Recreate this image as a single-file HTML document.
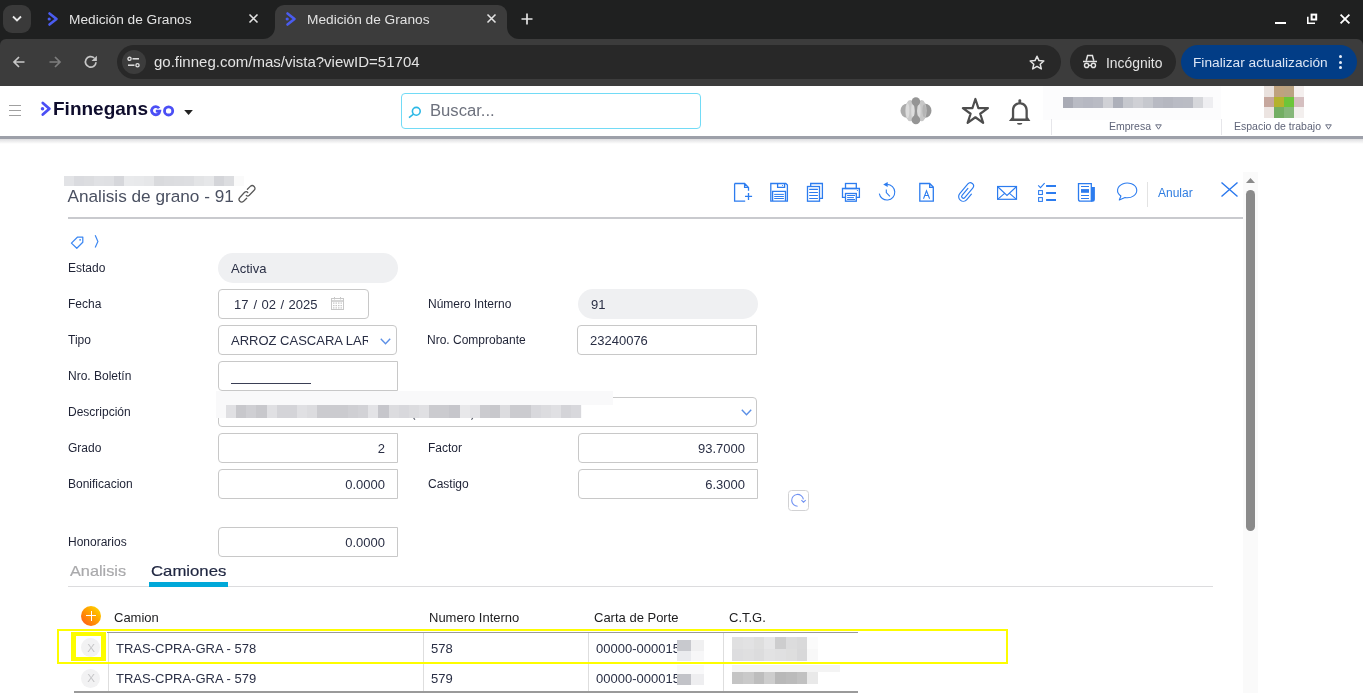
<!DOCTYPE html>
<html><head><meta charset="utf-8">
<style>
*{box-sizing:border-box;margin:0;padding:0}
html,body{width:1363px;height:693px;overflow:hidden;background:#fff;font-family:"Liberation Sans",sans-serif;position:relative}
.a{position:absolute}
svg{position:absolute;overflow:visible}
/* chrome */
#strip{left:0;top:0;width:1363px;height:50px;background:#1f2020}
#tabbtn{left:3px;top:5px;width:28px;height:28px;border-radius:9px;background:#3a3a3a}
.tabt{font-size:13.7px;color:#e3e3e3;top:12px;white-space:nowrap}
#acttab{left:275px;top:5px;width:232px;height:36px;background:#3c3c3c;border-radius:9px 9px 0 0}
#toolbar{left:0;top:39px;width:1363px;height:47px;background:#3c3c3c;border-radius:6px 6px 0 0}
#omni{left:117px;top:45px;width:944px;height:34px;border-radius:17px;background:#282828}
#url{left:154px;top:53px;font-size:15px;color:#e3e3e3;white-space:nowrap}
#incog{left:1070px;top:45px;width:106px;height:34px;border-radius:17px;background:#282828}
#fin{left:1181px;top:45px;width:176px;height:34px;border-radius:17px;background:#023d86}
/* app header */
#hdr{left:0;top:86px;width:1363px;height:50px;background:#fff}
#hdrline{left:0;top:136px;width:1363px;height:3px;background:#9da0a9}
#hdrshadow{left:0;top:139px;width:1363px;height:5px;background:linear-gradient(#dedee0,#fff)}
.lbl{font-size:12px;color:#1e2235;white-space:nowrap;left:68px}
.inp{border:1px solid #c8c8c8;border-radius:4px;background:#fff;height:30px}
.pill{background:#eff0f2;border-radius:15px;height:30px}
.val{font-size:13px;color:#2a2f45;white-space:nowrap}
</style></head><body>
<div id="root" style="position:absolute;left:0;top:0;width:1363px;height:693px;will-change:transform;overflow:hidden">
<!-- ===== browser chrome ===== -->
<div class="a" id="strip"></div>
<div class="a" id="tabbtn"></div>
<svg style="left:11px;top:14px" width="12" height="10" viewBox="0 0 12 10"><path d="M2 2.5 L6 6.5 L10 2.5" fill="none" stroke="#e8e8e8" stroke-width="1.8"/></svg>
<svg style="left:47px;top:12px" width="12" height="14" viewBox="0 0 12 14"><path d="M2.5 1.5 L9.5 7 L2.5 12.5" fill="none" stroke="#4a5cf0" stroke-width="2.6" stroke-linecap="round" stroke-linejoin="round"/><circle cx="2.2" cy="7" r="1.6" fill="#4a5cf0"/></svg>
<div class="a tabt" style="left:69px">Medición de Granos</div>
<svg style="left:249px;top:14px" width="9" height="9" viewBox="0 0 9 9"><path d="M0.5 0.5 L8.5 8.5 M8.5 0.5 L0.5 8.5" stroke="#e3e3e3" stroke-width="1.6"/></svg>
<div class="a" id="acttab"></div>
<div class="a" style="left:263px;top:27px;width:12px;height:12px;background:#3c3c3c"></div>
<div class="a" style="left:263px;top:27px;width:12px;height:12px;background:#1f2020;border-radius:0 0 12px 0"></div>
<div class="a" style="left:507px;top:27px;width:12px;height:12px;background:#3c3c3c"></div>
<div class="a" style="left:507px;top:27px;width:12px;height:12px;background:#1f2020;border-radius:0 0 0 12px"></div>
<svg style="left:285px;top:12px" width="12" height="14" viewBox="0 0 12 14"><path d="M2.5 1.5 L9.5 7 L2.5 12.5" fill="none" stroke="#4a5cf0" stroke-width="2.6" stroke-linecap="round" stroke-linejoin="round"/><circle cx="2.2" cy="7" r="1.6" fill="#4a5cf0"/></svg>
<div class="a tabt" style="left:307px">Medición de Granos</div>
<svg style="left:487px;top:14px" width="9" height="9" viewBox="0 0 9 9"><path d="M0.5 0.5 L8.5 8.5 M8.5 0.5 L0.5 8.5" stroke="#e3e3e3" stroke-width="1.6"/></svg>
<svg style="left:521px;top:13px" width="12" height="12" viewBox="0 0 12 12"><path d="M6 0.5 V11.5 M0.5 6 H11.5" stroke="#e3e3e3" stroke-width="1.7"/></svg>
<!-- window controls -->
<div class="a" style="left:1275px;top:21.5px;width:10.5px;height:2.6px;background:#fff"></div>
<svg style="left:0;top:0" width="1363" height="693" viewBox="0 0 1363 693"><path d="M1307.8 16.8 V23.2 H1315" fill="none" stroke="#fff" stroke-width="1.6"/><rect x="1311.6" y="14.6" width="4.6" height="4.9" fill="none" stroke="#fff" stroke-width="2"/></svg>
<svg style="left:1340px;top:14px" width="10" height="10" viewBox="0 0 10 10"><path d="M0.6 0.6 L9.4 9.4 M9.4 0.6 L0.6 9.4" stroke="#fff" stroke-width="1.8"/></svg>

<div class="a" id="toolbar"></div>
<svg style="left:13px;top:56px" width="12" height="12" viewBox="0 0 12 12"><path d="M11.5 6 H1.2 M6 1 L1 6 L6 11" fill="none" stroke="#c7c7c7" stroke-width="1.7"/></svg>
<svg style="left:49px;top:56px" width="12" height="12" viewBox="0 0 12 12"><path d="M0.5 6 H10.8 M6 1 L11 6 L6 11" fill="none" stroke="#7d7d7d" stroke-width="1.7"/></svg>
<svg style="left:0;top:0" width="1363" height="693" viewBox="0 0 1363 693"><path d="M96 62.2 A5.3 5.3 0 1 1 94.2 57.9" fill="none" stroke="#c7c7c7" stroke-width="1.7"/><path d="M91.5 61 L96.9 55.7 V61 Z" fill="#c7c7c7"/></svg>
<div class="a" id="omni"></div>
<div class="a" style="left:122px;top:50px;width:24px;height:24px;border-radius:12px;background:#3c3c3c"></div>
<svg style="left:127px;top:56px" width="14" height="12" viewBox="0 0 14 12"><circle cx="2.5" cy="2.8" r="1.6" fill="none" stroke="#e3e3e3" stroke-width="1.3"/><path d="M5.5 2.8 H12" stroke="#e3e3e3" stroke-width="1.5"/><circle cx="10.5" cy="9.2" r="1.6" fill="none" stroke="#e3e3e3" stroke-width="1.3"/><path d="M1 9.2 H7.5" stroke="#e3e3e3" stroke-width="1.5"/></svg>
<div class="a" id="url">go.finneg.com/mas/vista?viewID=51704</div>
<svg style="left:1029px;top:55px" width="16" height="15" viewBox="0 0 16 15"><path d="M8 1.2 L10 5.6 L14.8 6 L11.2 9.2 L12.3 13.9 L8 11.4 L3.7 13.9 L4.8 9.2 L1.2 6 L6 5.6 Z" fill="none" stroke="#e3e3e3" stroke-width="1.5" stroke-linejoin="round"/></svg>
<div class="a" id="incog"></div>
<svg style="left:0;top:0" width="1363" height="693" viewBox="0 0 1363 693"><path d="M1086.2 60.8 L1087.6 55.6 H1092.4 L1093.8 60.8" fill="none" stroke="#e3e3e3" stroke-width="1.5"/><path d="M1083 61.5 H1097" stroke="#e3e3e3" stroke-width="1.5"/><circle cx="1086.6" cy="65.4" r="2.1" fill="none" stroke="#e3e3e3" stroke-width="1.4"/><circle cx="1093.4" cy="65.4" r="2.1" fill="none" stroke="#e3e3e3" stroke-width="1.4"/><path d="M1088.7 65.4 H1091.3" stroke="#e3e3e3" stroke-width="1.2"/></svg>
<div class="a" style="left:1106px;top:55px;font-size:13.9px;color:#e3e3e3;white-space:nowrap">Incógnito</div>
<div class="a" id="fin"></div>
<div class="a" style="left:1193px;top:55px;font-size:13.7px;color:#dde6f5;white-space:nowrap">Finalizar actualización</div>
<div class="a" style="left:1339.4px;top:55px;width:3px;height:3px;border-radius:2px;background:#e8eef8"></div>
<div class="a" style="left:1339.4px;top:60.5px;width:3px;height:3px;border-radius:2px;background:#e8eef8"></div>
<div class="a" style="left:1339.4px;top:65.9px;width:3px;height:3px;border-radius:2px;background:#e8eef8"></div>

<!-- ===== app header ===== -->
<div class="a" id="hdr"></div>
<div class="a" id="hdrline"></div>
<div class="a" id="hdrshadow"></div>

<!-- hamburger -->
<div class="a" style="left:9px;top:104.5px;width:12px;height:1.5px;background:#a0a0a0"></div>
<div class="a" style="left:9px;top:109.5px;width:12px;height:1.5px;background:#a0a0a0"></div>
<div class="a" style="left:9px;top:114.5px;width:12px;height:1.5px;background:#a0a0a0"></div>
<!-- logo -->
<svg style="left:0;top:0" width="1363" height="693" viewBox="0 0 1363 693"><path d="M42.8 103 L49.4 108.7 L42.8 114.5" fill="none" stroke="#4b4ff5" stroke-width="2.8" stroke-linecap="round" stroke-linejoin="round"/><circle cx="42.5" cy="108.7" r="1.75" fill="#4b4ff5"/></svg>
<div class="a" style="left:53px;top:97.5px;font-size:19px;font-weight:bold;color:#0e0c2c;white-space:nowrap;letter-spacing:0px">Finnegans</div>
<svg style="left:0;top:0" width="1363" height="693" viewBox="0 0 1363 693"><circle cx="168.6" cy="110.9" r="4.1" fill="none" stroke="#4b4ff5" stroke-width="2.8"/><path d="M159.1 108.3 A4.1 4.1 0 1 0 159.8 111.1 H155.8" fill="none" stroke="#4b4ff5" stroke-width="2.8"/></svg>
<svg style="left:0;top:0" width="1363" height="693" viewBox="0 0 1363 693"><path d="M184.2 110.1 H192.9 L188.55 115 Z" fill="#222"/></svg>
<!-- search -->
<div class="a" style="left:401px;top:93px;width:300px;height:36px;border:1px solid #72dbf6;border-radius:4px"></div>
<svg style="left:408px;top:106px" width="14" height="12" viewBox="0 0 14 12"><circle cx="8.3" cy="5.3" r="3.9" fill="none" stroke="#2cb8e6" stroke-width="1.6"/><path d="M5.5 8.2 L1 11.6" stroke="#2cb8e6" stroke-width="1.6"/></svg>
<div class="a" style="left:430px;top:102px;font-size:16px;color:#6d717d;white-space:nowrap;transform:scaleX(1.04);transform-origin:0 0">Buscar...</div>
<!-- right icons -->
<svg style="left:0;top:0" width="1363" height="693" viewBox="0 0 1363 693">
<ellipse cx="906.8" cy="110.7" rx="6.3" ry="7" fill="#ababab"/>
<ellipse cx="925.2" cy="110.7" rx="6.3" ry="7" fill="#979797"/>
<ellipse cx="910.2" cy="110.7" rx="5" ry="10.6" fill="#c9c9c9"/>
<ellipse cx="921.6" cy="110.7" rx="5" ry="10.6" fill="#c7c7c7"/>
<ellipse cx="907.6" cy="110.7" rx="1.8" ry="7.5" fill="#dcdcdc"/>
<ellipse cx="913.2" cy="110.7" rx="2" ry="9.5" fill="#dedede"/>
<ellipse cx="918.6" cy="110.7" rx="2" ry="9.5" fill="#dadada"/>
<ellipse cx="924.2" cy="110.7" rx="1.8" ry="6.5" fill="#b4b4b4"/>
<circle cx="915.9" cy="101.6" r="4.3" fill="#959595"/>
<circle cx="915.9" cy="119.9" r="4.3" fill="#959595"/>
<path d="M913.6 104 Q915.9 110.7 913.6 117.5 L918.2 117.5 Q915.9 110.7 918.2 104 Z" fill="#959595"/>
<path d="M975.40 99.00 L978.37 108.11 L987.95 108.12 L980.20 113.76 L983.16 122.88 L975.40 117.25 L967.64 122.88 L970.60 113.76 L962.85 108.12 L972.43 108.11 Z" fill="none" stroke="#4d4d4d" stroke-width="2.2" stroke-linejoin="round"/>
<path fill-rule="evenodd" fill="#505050" d="M1008.9 121 L1011.9 117.3 V110.5 C1011.9 105.4 1015 102.3 1019.8 102.3 C1024.6 102.3 1027.8 105.4 1027.8 110.5 V117.3 L1030.4 121 Z M1014.2 118.6 V110.8 C1014.2 107 1016.5 104.6 1019.8 104.6 C1023.1 104.6 1025.5 107 1025.5 110.8 V118.6 Z"/>
<rect x="1018.4" y="99.2" width="2.8" height="4.5" rx="1.3" fill="#505050"/>
<path d="M1017 122.9 H1022.4 A2.7 1.9 0 0 1 1017 122.9 Z" fill="#505050"/>
</svg>
<!-- empresa -->
<div class="a" style="left:1043px;top:86px;width:178px;height:34px;background:#fcfcfd"></div>
<div class="a" style="left:1051px;top:119px;width:1px;height:16px;background:#e6e6ea"></div>
<div class="a" style="left:1221px;top:119px;width:1px;height:16px;background:#e6e6ea"></div>
<div class="a" id="empblur" style="left:1063px;top:97px;height:11px;display:flex"><i style="display:block;width:10px;height:11px;background:#a9abb5"></i><i style="display:block;width:10px;height:11px;background:#b9bbc4"></i><i style="display:block;width:10px;height:11px;background:#b6b8c2"></i><i style="display:block;width:10px;height:11px;background:#b9bbc4"></i><i style="display:block;width:10px;height:11px;background:#d0d1d6"></i><i style="display:block;width:10px;height:11px;background:#adb0ba"></i><i style="display:block;width:10px;height:11px;background:#c6c8ce"></i><i style="display:block;width:10px;height:11px;background:#cfd0d5"></i><i style="display:block;width:10px;height:11px;background:#c6c8ce"></i><i style="display:block;width:10px;height:11px;background:#b8bac3"></i><i style="display:block;width:10px;height:11px;background:#b5b7c0"></i><i style="display:block;width:10px;height:11px;background:#b9bbc4"></i><i style="display:block;width:10px;height:11px;background:#babcc4"></i><i style="display:block;width:10px;height:11px;background:#d6d7db"></i><i style="display:block;width:10px;height:11px;background:#eeeef1"></i></div>
<div class="a" style="left:1108.5px;top:120.5px;font-size:10px;color:#5f6478;white-space:nowrap;transform:scaleX(1.05);transform-origin:0 0">Empresa</div>
<svg style="left:1155px;top:124px" width="7" height="6" viewBox="0 0 7 6"><path d="M0.7 0.8 H6.3 L3.5 5.2 Z" fill="none" stroke="#6a6f82" stroke-width="1"/></svg>
<div class="a" style="left:1233.5px;top:120.5px;font-size:10px;color:#5f6478;white-space:nowrap;transform:scaleX(1.05);transform-origin:0 0">Espacio de trabajo</div>
<svg style="left:1325px;top:124px" width="7" height="6" viewBox="0 0 7 6"><path d="M0.7 0.8 H6.3 L3.5 5.2 Z" fill="none" stroke="#6a6f82" stroke-width="1"/></svg>
<div class="a" id="avatar" style="left:1264px;top:86px;width:40px;height:32px;display:grid;grid-template-columns:repeat(4,10px);grid-template-rows:repeat(3,10.7px)">
<i style="background:#e9e1dd"></i><i style="background:#bfa27e"></i><i style="background:#baa382"></i><i style="background:#f4efee"></i>
<i style="background:#c6a79d"></i><i style="background:#b4b22d"></i><i style="background:#6cc53a"></i><i style="background:#d5bfc0"></i>
<i style="background:#ece4e1"></i><i style="background:#73ae63"></i><i style="background:#86b77a"></i><i style="background:#f3efee"></i>
</div>


<!-- ===== form ===== -->
<div class="a" id="topblur" style="left:64px;top:176px;height:10px;display:flex"><i style="display:block;width:10px;height:10px;background:#e2e3e6"></i><i style="display:block;width:10px;height:10px;background:#dadbdf"></i><i style="display:block;width:10px;height:10px;background:#dcdde0"></i><i style="display:block;width:10px;height:10px;background:#e0e1e4"></i><i style="display:block;width:10px;height:10px;background:#dfe0e3"></i><i style="display:block;width:10px;height:10px;background:#d6d7db"></i><i style="display:block;width:10px;height:10px;background:#e9eaec"></i><i style="display:block;width:10px;height:10px;background:#e8e9eb"></i><i style="display:block;width:10px;height:10px;background:#e6e7e9"></i><i style="display:block;width:10px;height:10px;background:#d9dadd"></i><i style="display:block;width:10px;height:10px;background:#dbdcdf"></i><i style="display:block;width:10px;height:10px;background:#dcdde0"></i><i style="display:block;width:10px;height:10px;background:#dddee1"></i><i style="display:block;width:10px;height:10px;background:#e3e4e6"></i><i style="display:block;width:10px;height:10px;background:#e6e7e9"></i><i style="display:block;width:10px;height:10px;background:#d4d5d9"></i><i style="display:block;width:10px;height:10px;background:#dcdde0"></i><i style="display:block;width:10px;height:10px;background:#fafafa"></i></div>
<div class="a" style="left:67.5px;top:185.8px;font-size:17.2px;color:#4a5061;white-space:nowrap">Analisis de grano - 91</div>
<svg style="left:0;top:0" width="1363" height="693" viewBox="0 0 1363 693"><g fill="none" stroke="#585858" stroke-width="1.25" stroke-linecap="round"><path d="M247.4 189.3 L250.3 186.4 Q252.2 184.6 254.1 186.5 Q255.9 188.4 254.1 190.3 L249.3 195.3 Q247.7 196.8 246.3 195.4"/><path d="M246.7 198.2 L243.6 201.2 Q241.6 203 239.8 201.2 Q238 199.4 239.8 197.5 L244.6 192.3 Q246.3 190.7 247.8 192.5"/></g></svg>
<div class="a" style="left:68px;top:217px;width:1175px;height:2px;background:#c9cace"></div>
<!-- toolbar icons -->
<svg style="left:0;top:0" width="1363" height="693" viewBox="0 0 1363 693"><g fill="none" stroke="#2c7cef" stroke-width="1.3" stroke-linejoin="miter">
<!-- new doc -->
<path d="M734.6 183.5 H744.6 L748.5 187.4 V190.8 M744.6 183.5 V187.4 H748.5 M734.6 183.5 V201.2 H745.2 M745 196.4 H752.1 M748.5 193 V199.9"/>
<!-- floppy -->
<path d="M770.8 183.5 H785.8 L787.4 185.1 V201.2 H770.8 Z M777.6 183.5 V187.4 H784.6 V183.5 M772.6 201.2 V191.4 H785.5 V201.2"/>
<path d="M774.2 194.4 H783.9 M774.2 196.5 H783.9 M774.2 198.5 H783.9" stroke-width="1.0"/>
<circle cx="782.5" cy="185.5" r="0.55" fill="#2c7cef" stroke="none"/>
<!-- copy -->
<path d="M810.7 186.3 V183.5 H822.4 V198.4 H819.6"/>
<rect x="807.5" y="186.5" width="12" height="14.7" fill="#fff"/>
<path d="M809.2 189.4 H817.9 M809.2 192.5 H817.9 M809.2 195.5 H817.9 M809.2 198.5 H817.9" stroke-width="1.2"/>
<!-- print -->
<rect x="845.5" y="183.5" width="10.8" height="5"/>
<path d="M845.4 197.4 H842.5 V188.5 H859.4 V197.4 H856.4"/>
<rect x="845.5" y="193.5" width="10.8" height="7.7" fill="#fff"/>
<path d="M847.1 195.5 H855 M847.1 197.6 H853.9 M847.1 199.5 H855" stroke-width="1.0"/>
<circle cx="857.4" cy="190.5" r="0.6" fill="#2c7cef" stroke="none"/>
<!-- history -->
<path d="M879.3 193.6 A7.8 7.8 0 1 0 887.2 184.4" stroke-width="1.1"/>
<path d="M883.2 184.6 L887.7 182.1 L887.7 187 Z" fill="#2c7cef" stroke="none"/>
<path d="M886.3 189.4 V192.6 L889.9 196.3" stroke-width="1.1"/>
<!-- doc A -->
<path d="M919.8 183.5 H929.7 L933.3 187.1 V201.2 H919.8 Z M929.7 183.5 V187.3 H933.3"/>
<path d="M923.5 198.7 L926.5 190.8 L929.6 198.7 M924.5 195.5 H928.5" stroke-width="1.05"/>
<!-- paperclip -->
<g transform="translate(966.8 192.4) rotate(40) scale(1.1)"><path d="M4.2 -1.5 V5 A4.2 4.2 0 0 1 -4.2 5 V-6.5 A2.9 2.9 0 0 1 1.6 -6.5 V4.8 A1.6 1.6 0 0 1 -1.6 4.8 V-3.5" stroke-width="1.05" stroke-linecap="round"/></g>
<!-- mail -->
<rect x="997.6" y="186.5" width="18.9" height="12.8" stroke-width="1.2"/>
<path d="M998 187 L1007 195.4 L1016.1 187 M998.2 198.9 L1004.3 193.6 M1015.9 198.9 L1009.8 193.6" stroke-width="1.1"/>
<!-- checklist -->
<path d="M1038.2 185.4 L1040.5 187.7 L1044.6 183.2" stroke-width="1.1"/>
<rect x="1038.6" y="190.6" width="3.8" height="3.9" stroke-width="1.05"/>
<rect x="1038.6" y="197.6" width="3.8" height="3.8" stroke-width="1.05"/>
<path d="M1046.1 186 H1056 M1046.1 193 H1056 M1046.1 200 H1056" stroke-width="2"/>
<!-- newspaper -->
<path d="M1091.2 187 H1094.9 V199.5 A2.2 2.2 0 0 1 1092.7 201.7 H1091.2 Z" fill="#2c7cef" stroke="none"/>
<path d="M1091.3 201.2 V183.6 H1078.5 V199.2 A2 2 0 0 0 1080.5 201.2 H1092"/>
<path d="M1081 186.5 H1089 M1081 195.4 H1089 M1081 198.5 H1089" stroke-width="1.05"/>
<rect x="1081" y="189.1" width="8" height="3.7" fill="#2c7cef" stroke="none"/>
<!-- bubble -->
<path d="M1120.9 196 A9.6 7.4 0 1 1 1125 197.6 L1119.3 200 Z" stroke-width="1.1" stroke-linejoin="round"/>
</g></svg>
<div class="a" style="left:1147px;top:182px;width:1px;height:25px;background:#e3e3e3"></div>
<div class="a" style="left:1158px;top:186.2px;font-size:12px;color:#2f7de1;white-space:nowrap">Anular</div>
<svg style="left:1221px;top:182px" width="17" height="15" viewBox="0 0 17 15"><path d="M0.5 0.5 L16.5 14.5 M16.5 0.5 L0.5 14.5" stroke="#2a78ee" stroke-width="1.4"/></svg>
<!-- scrollbar -->
<div class="a" style="left:1243px;top:172px;width:15px;height:521px;background:#fafafa"></div>
<svg style="left:1246px;top:178px" width="9" height="5" viewBox="0 0 9 5"><path d="M0 5 L4.5 0 L9 5 Z" fill="#8a8a8a"/></svg>
<div class="a" style="left:1246px;top:190px;width:9px;height:341px;border-radius:4.5px;background:#8a8a8a"></div>

<!-- tag / chevron -->
<svg style="left:0;top:0" width="1363" height="693" viewBox="0 0 1363 693"><path d="M71.4 243.1 L77.6 237 H82.8 V242.2 L76.8 248.3 Z" fill="none" stroke="#3d88f2" stroke-width="1.25" stroke-linejoin="round"/><circle cx="80.1" cy="239.8" r="0.9" fill="#3d88f2"/><path d="M95.2 235.3 L97.9 241.4 L95.2 247.5" fill="none" stroke="#3d88f2" stroke-width="1.2"/></svg>

<!-- left column -->
<div class="a lbl" style="top:261px">Estado</div>
<div class="a pill" style="left:218px;top:253px;width:180px"></div>
<div class="a val" style="left:231px;top:261px">Activa</div>

<div class="a lbl" style="top:297px">Fecha</div>
<div class="a inp" style="left:218px;top:289px;width:151px"></div>
<div class="a val" style="left:234px;top:297px">17</div><div class="a val" style="left:253.5px;top:297px">/</div><div class="a val" style="left:261.5px;top:297px">02</div><div class="a val" style="left:280.5px;top:297px">/</div><div class="a val" style="left:288.5px;top:297px">2025</div>
<svg style="left:331px;top:297px" width="13" height="13" viewBox="0 0 13 13"><rect x="0.5" y="1.5" width="12" height="11" fill="none" stroke="#c8c8c8" stroke-width="1"/><path d="M0.5 4 H12.5" stroke="#c8c8c8" stroke-width="1.5"/><g fill="#c8c8c8"><rect x="2" y="5.5" width="1.5" height="1.2"/><rect x="4.5" y="5.5" width="1.5" height="1.2"/><rect x="7" y="5.5" width="1.5" height="1.2"/><rect x="9.5" y="5.5" width="1.5" height="1.2"/><rect x="2" y="8" width="1.5" height="1.2"/><rect x="4.5" y="8" width="1.5" height="1.2"/><rect x="7" y="8" width="1.5" height="1.2"/><rect x="9.5" y="8" width="1.5" height="1.2"/><rect x="2" y="10.3" width="1.5" height="1.2"/><rect x="4.5" y="10.3" width="1.5" height="1.2"/><rect x="7" y="10.3" width="1.5" height="1.2"/><rect x="9.5" y="10.3" width="1.5" height="1.2"/></g><path d="M3.5 0 V2.5 M9.5 0 V2.5" stroke="#c8c8c8" stroke-width="1"/></svg>

<div class="a lbl" style="top:333px">Tipo</div>
<div class="a inp" style="left:218px;top:325px;width:179px"></div>
<div class="a val" style="left:231px;top:333px;width:137px;overflow:hidden">ARROZ CASCARA LARGO</div>
<svg style="left:380px;top:338px" width="11" height="7" viewBox="0 0 11 7"><path d="M0.8 0.8 L5.5 5.8 L10.2 0.8" fill="none" stroke="#5b8fe6" stroke-width="1.4"/></svg>

<div class="a lbl" style="top:369px">Nro. Boletín</div>
<div class="a inp" style="left:218px;top:361px;width:180px;border-radius:4px 0 0 4px"></div>
<div class="a" style="left:231px;top:382.5px;width:80px;height:1.3px;background:#3a3f55"></div>

<div class="a lbl" style="top:405px">Descripción</div>
<div class="a inp" style="left:218px;top:397px;width:539px"></div>
<div class="a" style="left:216px;top:391px;width:397px;height:14px;background:#f9f9fa"></div><div class="a" style="left:216px;top:405px;width:366px;height:13px;background:#f9f9fa"></div>
<div class="a" id="descblur" style="left:226px;top:405px;height:13px;display:flex"><i style="display:block;width:10.17px;height:13px;background:#e0e0e3"></i><i style="display:block;width:10.17px;height:13px;background:#c8c8cc"></i><i style="display:block;width:10.17px;height:13px;background:#cfcfd3"></i><i style="display:block;width:10.17px;height:13px;background:#c8c8cc"></i><i style="display:block;width:10.17px;height:13px;background:#e0e0e3"></i><i style="display:block;width:10.17px;height:13px;background:#d4d4d8"></i><i style="display:block;width:10.17px;height:13px;background:#d4d4d8"></i><i style="display:block;width:10.17px;height:13px;background:#e0e0e3"></i><i style="display:block;width:10.17px;height:13px;background:#dcdcdf"></i><i style="display:block;width:10.17px;height:13px;background:#cbcbcf"></i><i style="display:block;width:10.17px;height:13px;background:#cbcbcf"></i><i style="display:block;width:10.17px;height:13px;background:#cbcbcf"></i><i style="display:block;width:10.17px;height:13px;background:#cfcfd3"></i><i style="display:block;width:10.17px;height:13px;background:#d2d2d6"></i><i style="display:block;width:10.17px;height:13px;background:#e3e3e6"></i><i style="display:block;width:10.17px;height:13px;background:#c6c6cb"></i><i style="display:block;width:10.17px;height:13px;background:#dcdcdf"></i><i style="display:block;width:10.17px;height:13px;background:#d8d8dc"></i><i style="display:block;width:10.17px;height:13px;background:#dcdcdf"></i><i style="display:block;width:10.17px;height:13px;background:#e0e0e3"></i><i style="display:block;width:10.17px;height:13px;background:#cbcbcf"></i><i style="display:block;width:10.17px;height:13px;background:#cbcbcf"></i><i style="display:block;width:10.17px;height:13px;background:#c6c6cb"></i><i style="display:block;width:10.17px;height:13px;background:#e8e8ea"></i><i style="display:block;width:10.17px;height:13px;background:#e3e3e6"></i><i style="display:block;width:10.17px;height:13px;background:#cbcbcf"></i><i style="display:block;width:10.17px;height:13px;background:#c8c8cc"></i><i style="display:block;width:10.17px;height:13px;background:#dcdcdf"></i><i style="display:block;width:10.17px;height:13px;background:#cbcbcf"></i><i style="display:block;width:10.17px;height:13px;background:#cbcbcf"></i><i style="display:block;width:10.17px;height:13px;background:#d8d8dc"></i><i style="display:block;width:10.17px;height:13px;background:#dcdcdf"></i><i style="display:block;width:10.17px;height:13px;background:#e0e0e3"></i><i style="display:block;width:10.17px;height:13px;background:#d4d4d8"></i><i style="display:block;width:10.17px;height:13px;background:#d8d8dc"></i></div>
<svg style="left:0;top:0" width="1363" height="693" viewBox="0 0 1363 693"><path d="M413.6 418.2 L415 419.6" stroke="#555a66" stroke-width="1.2"/><path d="M472.8 418.2 L471.4 419.6" stroke="#555a66" stroke-width="1.2"/></svg>
<svg style="left:741px;top:409px" width="11" height="7" viewBox="0 0 11 7"><path d="M0.8 0.8 L5.5 5.8 L10.2 0.8" fill="none" stroke="#5b8fe6" stroke-width="1.4"/></svg>

<div class="a lbl" style="top:441px">Grado</div>
<div class="a inp" style="left:218px;top:433px;width:180px;border-radius:4px 0 0 4px"></div>
<div class="a val" style="left:218px;top:441px;width:167px;text-align:right">2</div>

<div class="a lbl" style="top:477px">Bonificacion</div>
<div class="a inp" style="left:218px;top:469px;width:180px;border-radius:4px 0 0 4px"></div>
<div class="a val" style="left:218px;top:477px;width:167px;text-align:right">0.0000</div>

<div class="a lbl" style="top:535px">Honorarios</div>
<div class="a inp" style="left:218px;top:527px;width:180px;border-radius:4px 0 0 4px"></div>
<div class="a val" style="left:218px;top:535px;width:167px;text-align:right">0.0000</div>

<!-- right column -->
<div class="a lbl" style="left:428px;top:297px">Número Interno</div>
<div class="a pill" style="left:578px;top:289px;width:180px"></div>
<div class="a val" style="left:591px;top:297px">91</div>

<div class="a lbl" style="left:427px;top:333px">Nro. Comprobante</div>
<div class="a inp" style="left:577px;top:325px;width:180px;border-radius:4px 0 0 4px"></div>
<div class="a val" style="left:590px;top:333px">23240076</div>

<div class="a lbl" style="left:428px;top:441px">Factor</div>
<div class="a inp" style="left:578px;top:433px;width:180px;border-radius:4px 0 0 4px"></div>
<div class="a val" style="left:578px;top:441px;width:167px;text-align:right">93.7000</div>

<div class="a lbl" style="left:428px;top:477px">Castigo</div>
<div class="a inp" style="left:578px;top:469px;width:180px;border-radius:4px 0 0 4px"></div>
<div class="a val" style="left:578px;top:477px;width:167px;text-align:right">6.3000</div>

<div class="a" style="left:788px;top:490px;width:21px;height:21px;border:1px solid #d2d2d4;border-radius:3.5px"></div>
<svg style="left:0;top:0" width="1363" height="693" viewBox="0 0 1363 693"><path d="M797.6 506.2 A5.9 5.9 0 1 1 803.4 499.3" fill="none" stroke="#6f91f2" stroke-width="1.1"/><path d="M801.4 500.2 L803.5 502.2 L805.7 500.2" fill="none" stroke="#6f91f2" stroke-width="1.1"/></svg>

<!-- tabs -->
<div class="a" style="left:70px;top:562px;font-size:15px;color:#a9a9ab;white-space:nowrap;transform:scaleX(1.085);transform-origin:0 0;-webkit-text-stroke:0.2px #a9a9ab">Analisis</div>
<div class="a" style="left:150.5px;top:562px;font-size:15px;color:#1f2640;white-space:nowrap;transform:scaleX(1.115);transform-origin:0 0;-webkit-text-stroke:0.2px #1f2640">Camiones</div>
<div class="a" style="left:68px;top:586px;width:1145px;height:1px;background:#dcdcde"></div>
<div class="a" style="left:149px;top:582px;width:79px;height:5px;background:#00a8d9"></div>

<!-- table -->
<div class="a" style="left:81px;top:606px;width:20px;height:20px;border-radius:10px;background:linear-gradient(225deg,#ffe000 0%,#ffa800 40%,#ff7010 80%,#ff4d4d 100%)"></div>
<div class="a" style="left:86.2px;top:615.1px;width:9.7px;height:1.3px;background:#fff"></div>
<div class="a" style="left:90.5px;top:611.2px;width:1.3px;height:9.7px;background:#fff"></div>
<div class="a val" style="left:114px;top:610px;color:#1d1d1f">Camion</div>
<div class="a val" style="left:429px;top:610px;color:#1d1d1f">Numero Interno</div>
<div class="a val" style="left:594px;top:610px;color:#1d1d1f">Carta de Porte</div>
<div class="a val" style="left:729px;top:610px;color:#1d1d1f">C.T.G.</div>

<div class="a" style="left:107px;top:631.8px;width:751px;height:1.4px;background:#9a9a9a"></div>
<div class="a" style="left:107px;top:663px;width:751px;height:1px;background:#e2e2e2"></div>
<div class="a" style="left:74px;top:691px;width:784px;height:2px;background:#9a9a9a"></div>
<div class="a" style="left:108px;top:633px;width:1px;height:58px;background:#dedede"></div>
<div class="a" style="left:423px;top:633px;width:1px;height:58px;background:#dedede"></div>
<div class="a" style="left:588px;top:633px;width:1px;height:58px;background:#dedede"></div>
<div class="a" style="left:723px;top:633px;width:1px;height:58px;background:#dedede"></div>

<div class="a" style="left:81px;top:638px;width:19px;height:19px;border-radius:10px;background:#f2f2f3"></div>
<div class="a" style="left:87.2px;top:640.8px;font-size:11.6px;color:#c6c6c8">X</div>
<div class="a" style="left:81px;top:668.5px;width:19px;height:19px;border-radius:10px;background:#f2f2f3"></div>
<div class="a" style="left:87.2px;top:670.8px;font-size:11.6px;color:#c6c6c8">X</div>

<div class="a val" style="left:116px;top:641px">TRAS-CPRA-GRA - 578</div>
<div class="a val" style="left:431px;top:641px">578</div>
<div class="a val" style="left:596px;top:641px">00000-000015</div>
<div class="a val" style="left:116px;top:671px">TRAS-CPRA-GRA - 579</div>
<div class="a val" style="left:431px;top:671px">579</div>
<div class="a val" style="left:596px;top:671px">00000-000015</div>

<div class="a" style="left:677px;top:640px;width:13.5px;height:10.8px;background:#c8c9ce"></div>
<div class="a" style="left:690.5px;top:640px;width:13.5px;height:10.8px;background:#f0f0f1"></div>
<div class="a" style="left:677px;top:650.8px;width:13.5px;height:10.7px;background:#eaebee"></div>
<div class="a" style="left:690.5px;top:650.8px;width:13.5px;height:10.7px;background:#f7f7f8"></div>
<div class="a" style="left:677px;top:664.5px;width:27px;height:9.2px;background:#f9f9fa"></div>
<div class="a" style="left:677px;top:673.7px;width:13.5px;height:10.9px;background:#c2c3c8"></div>
<div class="a" style="left:690.5px;top:673.7px;width:13.5px;height:10.9px;background:#eeeef0"></div>
<div class="a" style="left:732px;top:636.6px;display:grid;grid-template-columns:repeat(8,10.75px);grid-template-rows:12.1px 12.1px"><i style="background:#e0e0e1"></i><i style="background:#e2e2e3"></i><i style="background:#dedede"></i><i style="background:#e6e6e7"></i><i style="background:#cdcdce"></i><i style="background:#dcdcdd"></i><i style="background:#d9d9da"></i><i style="background:#fbfbfb"></i><i style="background:#dddddf"></i><i style="background:#dfdfe0"></i><i style="background:#dcdcdd"></i><i style="background:#e2e2e3"></i><i style="background:#e0e0e1"></i><i style="background:#dedede"></i><i style="background:#d8d8d9"></i><i style="background:#f8f8f8"></i></div>
<div class="a" style="left:732px;top:664.5px;width:108px;height:7.3px;background:#f4f4f4"></div>
<div class="a" style="left:732px;top:671.8px;display:flex;height:11.8px"><i style="display:block;width:10.75px;background:#c4c4c4"></i><i style="display:block;width:10.75px;background:#c9c9c9"></i><i style="display:block;width:10.75px;background:#bdbdbd"></i><i style="display:block;width:10.75px;background:#cdcdcd"></i><i style="display:block;width:10.75px;background:#b8b8b8"></i><i style="display:block;width:10.75px;background:#bbbbbb"></i><i style="display:block;width:10.75px;background:#c1c1c1"></i><i style="display:block;width:10.75px;background:#e9e9e9"></i></div>
<!-- yellow highlights -->
<div class="a" style="left:57px;top:629px;width:951px;height:35px;border:2.2px solid #fdfd00"></div>
<div class="a" style="left:71.3px;top:632px;width:35.2px;height:28.8px;border:4.4px solid #fdfd00;border-left-width:5.4px;border-right-width:5.2px"></div>

</div>
</body></html>
